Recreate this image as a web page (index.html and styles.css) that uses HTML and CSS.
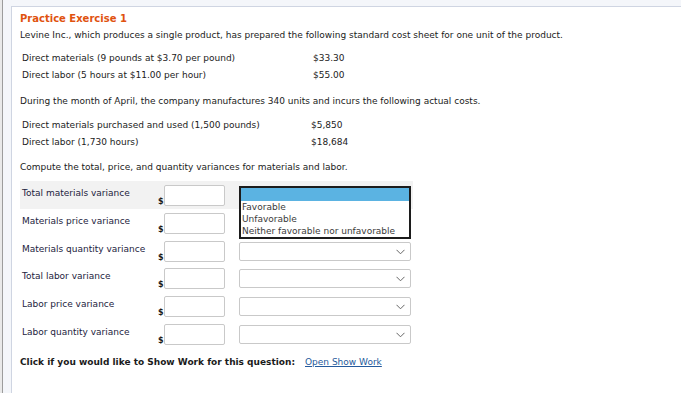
FILE: index.html
```html
<!DOCTYPE html>
<html>
<head>
<meta charset="utf-8">
<link rel="stylesheet" href="styles.css">
</head>
<body>
<div class="rail"></div>
<div class="frame">
  <div class="panel">
    <div class="title">Practice Exercise 1</div>
    <p class="intro">Levine Inc., which produces a single product, has prepared the following standard cost sheet for one unit of the product.</p>
    <div class="sheet sheet-a">
      <span>Direct materials (9 pounds at $3.70 per pound)</span><span>$33.30</span>
      <span>Direct labor (5 hours at $11.00 per hour)</span><span>$55.00</span>
    </div>
    <p class="para">During the month of April, the company manufactures 340 units and incurs the following actual costs.</p>
    <div class="sheet sheet-b">
      <span>Direct materials purchased and used (1,500 pounds)</span><span>$5,850</span>
      <span>Direct labor (1,730 hours)</span><span>$18,684</span>
    </div>
    <p class="para">Compute the total, price, and quantity variances for materials and labor.</p>
    <div class="vtable">
      <div class="vrow shaded">
        <span class="vlabel">Total materials variance</span>
        <span class="dollar">$</span><span class="inp"></span>
        <div class="selwrap">
          <div class="dropdown">
            <div class="opt hl"></div>
            <div class="opt">Favorable</div>
            <div class="opt">Unfavorable</div>
            <div class="opt">Neither favorable nor unfavorable</div>
          </div>
        </div>
      </div>
      <div class="vrow">
        <span class="vlabel">Materials price variance</span>
        <span class="dollar">$</span><span class="inp"></span>
        <div class="selwrap"><div class="sel"><svg class="chev" width="9" height="6" viewBox="0 0 9 6"><path d="M0.5 0.8 L4.5 4.8 L8.5 0.8" fill="none" stroke="#666" stroke-width="1"/></svg></div></div>
      </div>
      <div class="vrow">
        <span class="vlabel">Materials quantity variance</span>
        <span class="dollar">$</span><span class="inp"></span>
        <div class="selwrap"><div class="sel"><svg class="chev" width="9" height="6" viewBox="0 0 9 6"><path d="M0.5 0.8 L4.5 4.8 L8.5 0.8" fill="none" stroke="#666" stroke-width="1"/></svg></div></div>
      </div>
      <div class="vrow">
        <span class="vlabel">Total labor variance</span>
        <span class="dollar">$</span><span class="inp"></span>
        <div class="selwrap"><div class="sel"><svg class="chev" width="9" height="6" viewBox="0 0 9 6"><path d="M0.5 0.8 L4.5 4.8 L8.5 0.8" fill="none" stroke="#666" stroke-width="1"/></svg></div></div>
      </div>
      <div class="vrow">
        <span class="vlabel">Labor price variance</span>
        <span class="dollar">$</span><span class="inp"></span>
        <div class="selwrap"><div class="sel"><svg class="chev" width="9" height="6" viewBox="0 0 9 6"><path d="M0.5 0.8 L4.5 4.8 L8.5 0.8" fill="none" stroke="#666" stroke-width="1"/></svg></div></div>
      </div>
      <div class="vrow">
        <span class="vlabel">Labor quantity variance</span>
        <span class="dollar">$</span><span class="inp"></span>
        <div class="selwrap"><div class="sel"><svg class="chev" width="9" height="6" viewBox="0 0 9 6"><path d="M0.5 0.8 L4.5 4.8 L8.5 0.8" fill="none" stroke="#666" stroke-width="1"/></svg></div></div>
      </div>
    </div>
    <div class="showwork">
      <span class="sw-label">Click if you would like to Show Work for this question:</span>
      <a class="sw-link">Open Show Work</a>
    </div>
  </div>
</div>
</body>
</html>
```

FILE: styles.css
```css
html, body {
  margin: 0;
  padding: 0;
  height: 100%;
}
body {
  display: flex;
  background: #f4f6fa;
  font-family: "DejaVu Sans", Verdana, sans-serif;
  font-size: 9px;
  color: #1b1b1b;
  overflow: hidden;
}
.rail {
  width: 2px;
  background: #e9e9e9;
  border-right: 1px solid #9c9c9c;
  flex: none;
}
.frame {
  flex: 1;
  padding: 6px 0 0 8px;
  display: flex;
}
.panel {
  flex: 1;
  background: #fff;
  border-top: 1px solid #cfd5e2;
  border-left: 1px solid #cfd5e2;
  padding: 5px 0 0 8px;
}
.title {
  color: #e0520f;
  font-weight: bold;
  font-size: 10px;
  line-height: 13px;
}
.intro {
  margin: 4px 0 0 0;
  line-height: 13px;
}
.para {
  margin: 0;
  line-height: 13px;
}
.sheet {
  display: grid;
  row-gap: 4px;
  line-height: 13px;
  padding-left: 2px;
}
.sheet-a {
  grid-template-columns: 291px auto;
  margin: 10px 0 13px 0;
}
.sheet-b {
  grid-template-columns: 289px auto;
  margin: 11px 0 12px 0;
}
.vtable {
  margin-top: 7px;
  width: 393px;
}
.vrow {
  display: flex;
  height: 27.8px;
  position: relative;
}
.vrow.shaded {
  background: #f2f2f2;
}
.vlabel {
  width: 136px;
  padding-left: 2px;
  padding-top: 6px;
  line-height: 13px;
  color: #1d2340;
}
.dollar {
  width: 6px;
  padding-top: 14px;
  line-height: 13px;
  font-weight: bold;
  font-size: 8px;
}
.inp {
  width: 59px;
  height: 19px;
  margin-top: 4px;
  border: 1px solid #c9c9c9;
  border-radius: 2px;
  background: #fff;
}
.selwrap {
  margin-left: 14px;
  width: 172px;
  position: relative;
}
.sel {
  margin-top: 5px;
  height: 17px;
  border: 1px solid #c9c9c9;
  border-radius: 2px;
  background: #fff;
  position: relative;
}
.chev {
  position: absolute;
  right: 5px;
  top: 6px;
}
.dropdown {
  position: absolute;
  top: 5px;
  left: 0;
  width: 168px;
  border: 2px solid #1c1c1c;
  background: #fff;
  z-index: 2;
}
.opt {
  line-height: 12px;
  color: #3a3a3a;
  padding-left: 1px;
  font-size: 9px;
}
.opt.hl {
  background: #5bb3e2;
  height: 13px;
}
.showwork {
  margin-top: 8px;
  display: flex;
  line-height: 13px;
}
.sw-label {
  font-weight: bold;
  width: 285px;
}
.sw-link {
  color: #255a9c;
  text-decoration: underline;
}
```
